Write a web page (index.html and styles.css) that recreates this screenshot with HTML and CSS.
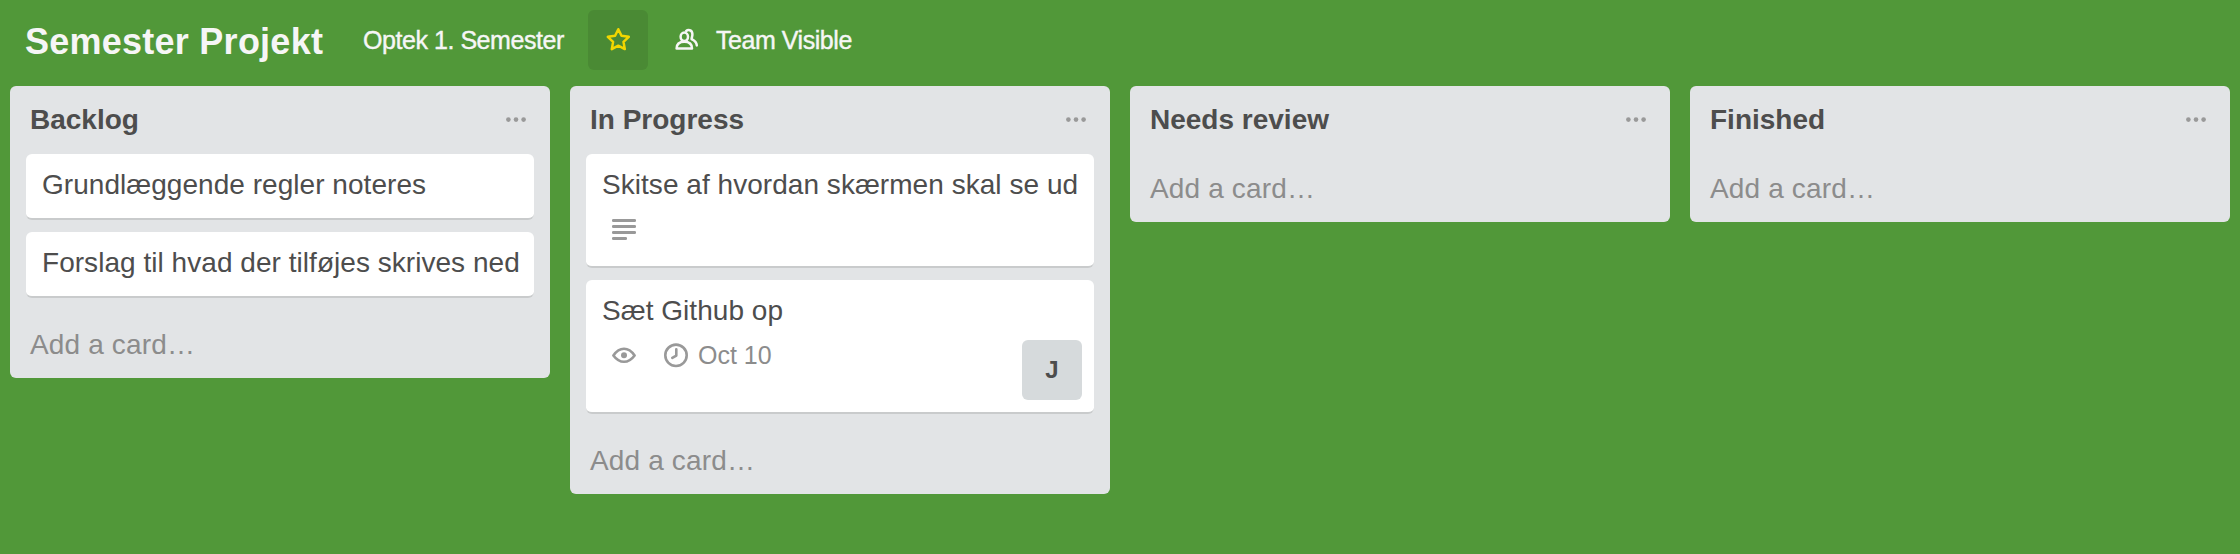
FILE: index.html
```html
<!DOCTYPE html>
<html lang="da">
<head>
<meta charset="utf-8">
<title>Semester Projekt</title>
<link rel="stylesheet" href="styles.css">
</head>
<body>
<header class="board-header">
  <h1 class="board-name">Semester Projekt</h1>
  <span class="org-name">Optek 1. Semester</span>
  <span class="star-button">
    <svg width="26" height="26" viewBox="0 0 26 26" fill="none" stroke="currentColor" stroke-width="2.5" stroke-linejoin="round"><path d="M13.300 2.200L16.500 8.700L23.800 9.800L18.500 14.900L19.800 22.100L13.300 18.700L6.800 22.100L8.100 14.900L2.800 9.800L10.100 8.700z"/></svg>
  </span>
  <span class="visibility">
    <svg class="visibility-icon" width="24" height="24" viewBox="0 0 24 24" fill="none" stroke="currentColor" stroke-width="2.500" stroke-linecap="round" stroke-linejoin="round"><ellipse cx="9.300" cy="8.800" rx="3.700" ry="4.300"/><path d="M1.600 20.500c0-4.800 3-6.800 7.700-6.800s7.700 2 7.700 6.800z"/><path d="M11.200 3c1.600-1.400 5.800-1.500 6.200 2.900.2 2.300-.8 3.600-.8 5.200 1.800 1 4.900 2.200 5.200 6.300"/></svg>
    <span class="visibility-text">Team Visible</span>
  </span>
</header>
<main class="board">
  <section class="list">
    <div class="list-header"><h2 class="list-title">Backlog</h2><svg class="menu-icon" width="20" height="6" viewBox="0 0 20 6" fill="currentColor"><circle cx="2.400" cy="2.600" r="2.300"/><circle cx="10" cy="2.600" r="2.300"/><circle cx="17.600" cy="2.600" r="2.300"/></svg></div>
    <div class="cards">
      <article class="card"><p class="card-title">Grundlæggende regler noteres</p></article>
      <article class="card"><p class="card-title">Forslag til hvad der tilføjes skrives ned</p></article>
    </div>
    <a class="add-card">Add a card…</a>
  </section>
  <section class="list">
    <div class="list-header"><h2 class="list-title">In Progress</h2><svg class="menu-icon" width="20" height="6" viewBox="0 0 20 6" fill="currentColor"><circle cx="2.400" cy="2.600" r="2.300"/><circle cx="10" cy="2.600" r="2.300"/><circle cx="17.600" cy="2.600" r="2.300"/></svg></div>
    <div class="cards">
      <article class="card card-described">
        <p class="card-title">Skitse af hvordan skærmen skal se ud</p>
        <div class="badges">
          <svg width="24" height="26" viewBox="0 0 24 26" fill="currentColor"><rect y="3" width="24" height="3" rx="1.300"/><rect y="9" width="24" height="3" rx="1.300"/><rect y="15" width="24" height="3" rx="1.300"/><rect y="21" width="15" height="3" rx="1.300"/></svg>
        </div>
      </article>
      <article class="card card-assigned">
        <p class="card-title">Sæt Github op</p>
        <div class="card-footer">
          <div class="badges">
            <svg width="24" height="26" viewBox="0 0 24 26"><path d="M1.400 13.400Q6 6.700 12 6.700T22.600 13.400Q18 19.700 12 19.700T1.400 13.400z" fill="none" stroke="currentColor" stroke-width="2.600" stroke-linejoin="round"/><circle cx="12" cy="13.300" r="3" fill="currentColor"/></svg>
            <span class="due">
              <svg width="24" height="26" viewBox="0 0 24 26" fill="none" stroke="currentColor" stroke-linecap="round" stroke-linejoin="round"><circle cx="12" cy="13.300" r="10.700" stroke-width="2.600"/><path d="M12.300 7.300v6.300L8.300 15.900" stroke-width="2.600"/></svg>
              <span class="due-text">Oct 10</span>
            </span>
          </div>
          <span class="member">J</span>
        </div>
      </article>
    </div>
    <a class="add-card">Add a card…</a>
  </section>
  <section class="list">
    <div class="list-header"><h2 class="list-title">Needs review</h2><svg class="menu-icon" width="20" height="6" viewBox="0 0 20 6" fill="currentColor"><circle cx="2.400" cy="2.600" r="2.300"/><circle cx="10" cy="2.600" r="2.300"/><circle cx="17.600" cy="2.600" r="2.300"/></svg></div>
    <a class="add-card">Add a card…</a>
  </section>
  <section class="list">
    <div class="list-header"><h2 class="list-title">Finished</h2><svg class="menu-icon" width="20" height="6" viewBox="0 0 20 6" fill="currentColor"><circle cx="2.400" cy="2.600" r="2.300"/><circle cx="10" cy="2.600" r="2.300"/><circle cx="17.600" cy="2.600" r="2.300"/></svg></div>
    <a class="add-card">Add a card…</a>
  </section>
</main>
</body>
</html>
```
FILE: styles.css
```css
* { box-sizing: border-box; }

body {
  margin: 0;
  min-height: 554px;
  background: #519839;
  color: #4d4d4d;
  font-family: "Liberation Sans", Arial, sans-serif;
  font-size: 28px;
}

h1, h2, p { margin: 0; }
svg { display: block; flex: none; }

.board-header {
  display: flex;
  height: 86px;
  padding: 10px 25px;
  color: #f6f6f6;
  white-space: nowrap;
}

.board-name {
  width: 338px;
  padding-top: 2px;
  font-size: 36px;
  letter-spacing: 0.25px;
  line-height: 60px;
}

.org-name,
.visibility {
  font-size: 25px;
  letter-spacing: -0.45px;
  -webkit-text-stroke: 0.4px;
}

.org-name {
  width: 225px;
  line-height: 60px;
}

.star-button {
  display: flex;
  align-items: center;
  justify-content: center;
  width: 60px;
  height: 60px;
  border-radius: 6px;
  background: #4a8a34;
  color: #f2d600;
}

.visibility {
  display: flex;
  align-items: center;
  gap: 17px;
  height: 60px;
  margin-left: 27px;
}

.board {
  display: grid;
  grid-template-columns: repeat(4, 540px);
  gap: 20px;
  align-items: start;
  padding: 0 10px;
}

.list {
  border-radius: 6px;
  background: #e2e4e6;
  white-space: nowrap;
}

.list-header {
  display: flex;
  align-items: center;
  justify-content: space-between;
  height: 68px;
  padding: 0 24px 0 20px;
}

.list-title {
  font-size: 28px;
  line-height: 68px;
}

.menu-icon { color: #999; }

.cards {
  display: grid;
  gap: 12px;
  padding: 0 16px 20px;
}

.card {
  height: 66px;
  padding: 12px 12px 0 16px;
  border-radius: 6px;
  border-bottom: 2px solid #c9cbcc;
  background: #fff;
}

.card-title {
  height: 36px;
  letter-spacing: 0.04px;
  line-height: 38px;
}

.card-described { height: 114px; }
.card-assigned { height: 134px; }

.badges {
  display: flex;
  gap: 28px;
  padding: 14px 0 0 10px;
  color: #999;
}

.card-footer {
  display: flex;
  justify-content: space-between;
}

.due {
  display: flex;
  gap: 10px;
  color: #8c8c8c;
}

.due svg { color: #999; }

.due-text {
  font-size: 25px;
  line-height: 27px;
}

.member {
  width: 60px;
  height: 60px;
  margin-top: 12px;
  border-radius: 6px;
  background: #d6dadc;
  font-size: 24px;
  font-weight: 700;
  line-height: 60px;
  text-align: center;
}

.add-card {
  display: block;
  height: 68px;
  padding-left: 20px;
  color: #8c8c8c;
  letter-spacing: 0.15px;
  line-height: 70px;
}

.cards + .add-card {
  height: 60px;
  line-height: 54px;
}
```
